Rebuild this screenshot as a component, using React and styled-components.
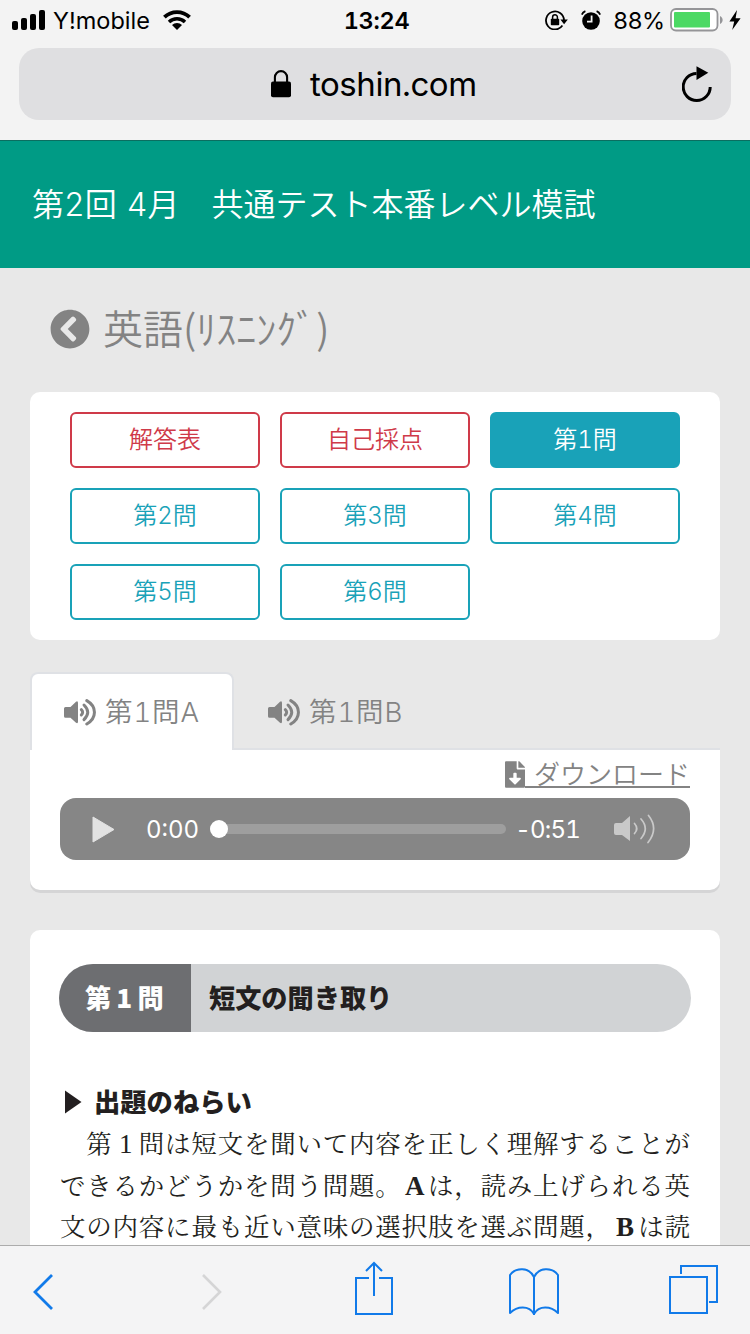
import styled, { createGlobalStyle, css } from 'styled-components';
import { FaChevronCircleLeft, FaFileDownload } from 'react-icons/fa';

const questionLinks = [
  { label: '解答表', variant: 'danger' },
  { label: '自己採点', variant: 'danger' },
  { label: '第1問', variant: 'info', active: true },
  { label: '第2問', variant: 'info' },
  { label: '第3問', variant: 'info' },
  { label: '第4問', variant: 'info' },
  { label: '第5問', variant: 'info' },
  { label: '第6問', variant: 'info' },
];

const audioTabs = [
  { label: '第1問A', active: true },
  { label: '第1問B', active: false },
];

const colors = {
  danger: '#cf3a49',
  info: '#19a2b8',
};

const StatusBar = () => (
  <StatusRow>
    <StatusLeft>
      <svg width="34" height="20" viewBox="0 0 34 20">
        <rect x="0" y="11" width="6" height="9" rx="2" />
        <rect x="9" y="8" width="6" height="12" rx="2" />
        <rect x="18" y="4" width="6" height="16" rx="2" />
        <rect x="27" y="0" width="6" height="20" rx="2" />
      </svg>
      <Carrier>Y!mobile</Carrier>
      <svg width="28" height="20" viewBox="0 0 28 20">
        <path d="M1.4 7.2a18 18 0 0 1 25.2 0" fill="none" stroke="#000" strokeWidth="3.8" />
        <path d="M6 12a11.6 11.6 0 0 1 16 0" fill="none" stroke="#000" strokeWidth="3.5" />
        <path d="M14 20l-5-5a7.2 7.2 0 0 1 10 0z" />
      </svg>
    </StatusLeft>
    <Clock>13:24</Clock>
    <StatusRight>
      <svg width="23" height="20" viewBox="0 0 23 20">
        <path d="M17.4 15.6a9 9 0 1 1 1.6-5.4" fill="none" stroke="#000" strokeWidth="1.8" />
        <path d="M15.4 9.6h7.4l-3.7 4.6z" />
        <rect x="5.8" y="8.8" width="8.4" height="6.4" rx="0.8" />
        <path d="M7.6 9V7.2a2.4 2.4 0 0 1 4.8 0V9" fill="none" stroke="#000" strokeWidth="1.5" />
      </svg>
      <AlarmIcon width="20" height="20" viewBox="0 0 20 20">
        <circle cx="10" cy="11" r="8.8" />
        <path d="M10.6 5.4v6.2H6" fill="none" stroke="#f3f3f3" strokeWidth="1.8" />
        <path d="M0.8 4.6A6 6 0 0 1 4.4 1.1M19.2 4.6a6 6 0 0 0-3.6-3.5" fill="none" stroke="#000" strokeWidth="1.8" />
      </AlarmIcon>
      <Percent>88%</Percent>
      <svg width="54" height="24" viewBox="0 0 54 24">
        <rect x="1" y="1" width="46.5" height="21.5" rx="5" fill="#fff" stroke="#959598" strokeWidth="1.8" />
        <rect x="4" y="4" width="36" height="15.5" rx="1" fill="#4cd964" />
        <path d="M50 8c3.5 1.5 3.5 6.5 0 8z" fill="#959598" />
      </svg>
      <BoltIcon width="12" height="20" viewBox="0 0 12 20">
        <path d="M8 0L0.4 11.4H5.2L3.2 20L11.6 8.2H6.6z" />
      </BoltIcon>
    </StatusRight>
  </StatusRow>
);

const AddressBar = () => (
  <AddressField>
    <svg width="20" height="28" viewBox="0 0 20 28">
      <rect x="0" y="11.5" width="20" height="15.8" rx="2" />
      <path d="M3.9 12.5V7.2a6 6 0 0 1 12.2 0v5.3" fill="none" stroke="#000" strokeWidth="2.1" />
    </svg>
    <Host>toshin.com</Host>
    <ReloadIcon width="32" height="36" viewBox="0 0 32 36">
      <path d="M28.2 21A13.5 13.5 0 1 1 14.5 7.5" fill="none" stroke="#000" strokeWidth="3" />
      <path d="M14.5 0.3V14L26.3 6.8z" />
    </ReloadIcon>
  </AddressField>
);

const VolumeIcon = () => (
  <svg width="33" height="27" viewBox="0 0 33 27">
    <path
      d="M1.5 8H6.5L12 2.7Q14 1.5 14 4V22.5Q14 25 12 23.8L6.5 18.7H1.5Q0 18.7 0 17.2V9.5Q0 8 1.5 8z"
      fill="currentColor"
    />
    <g fill="none" stroke="currentColor" strokeWidth="3" strokeLinecap="round">
      <path d="M17.3 10.7Q20 13.3 17.3 16" />
      <path d="M20 6Q27.5 13.3 20 20.6" />
      <path d="M22.8 1.6C33 7.5 33 19 22.8 25" />
    </g>
  </svg>
);

const Player = () => (
  <PlayerBox>
    <svg width="23" height="27" viewBox="0 0 23 27">
      <path d="M1 1L22 13.5L1 26z" fill="#e2e2e2" stroke="#e2e2e2" strokeLinejoin="round" />
    </svg>
    <Elapsed>0:00</Elapsed>
    <Track>
      <Knob />
    </Track>
    <Remaining>-0:51</Remaining>
    <svg width="42" height="30" viewBox="0 0 42 30">
      <path d="M2 9H8L16 2V27L8 21H2Q0 21 0 19V11Q0 9 2 9z" fill="#c9c9c9" />
      <g fill="none" stroke="#c9c9c9" strokeWidth="1.7" strokeLinecap="round">
        <path d="M20.5 9.5Q25 14.5 20.5 19.5" />
        <path d="M27 5Q35.5 14.5 27 24.5" />
        <path d="M34.5 1.5Q45 14.5 34 28.5" />
      </g>
    </svg>
  </PlayerBox>
);

const Toolbar = () => (
  <ToolbarRow>
    <svg width="20" height="40" viewBox="0 0 20 40">
      <path d="M19 5L2 22L19 39" fill="none" stroke="#117ae9" strokeWidth="2.8" />
    </svg>
    <svg width="20" height="40" viewBox="0 0 20 40">
      <path d="M1 5L18 22L1 39" fill="none" stroke="#d5d5d6" strokeWidth="2.6" />
    </svg>
    <svg width="40" height="60" viewBox="0 0 40 60">
      <g fill="none" stroke="#117ae9" strokeWidth="2">
        <path d="M15 18H2V54H38V18H25" />
        <path d="M20 36V4M12 11L20 3L28 11" />
      </g>
    </svg>
    <svg width="52" height="54" viewBox="0 0 52 54">
      <g fill="none" stroke="#117ae9" strokeWidth="2" strokeLinejoin="round">
        <path d="M26 14C21 4 8 4 2 12V50C9 43 21 42 26 51C31 42 43 43 50 50V12C44 4 31 4 26 14z" />
        <path d="M26 14V52" />
      </g>
    </svg>
    <svg width="50" height="50" viewBox="0 0 50 50">
      <g fill="none" stroke="#117ae9" strokeWidth="2">
        <rect x="2" y="12" width="37" height="36" />
        <path d="M13 9V1H49V37H41" />
      </g>
    </svg>
  </ToolbarRow>
);

const App = () => {
  return (
    <Screen>
      <GlobalStyle />
      <BrowserTop>
        <StatusBar />
        <AddressBar />
      </BrowserTop>

      <Page>
        <Banner>第2回 4月　共通テスト本番レベル模試</Banner>

        <SubjectHeading>
          <FaChevronCircleLeft size={40} />
          <span>英語(ﾘｽﾆﾝｸﾞ)</span>
        </SubjectHeading>

        <LinkCard>
          {questionLinks.map(({ label, variant, active }) => (
            <LinkButton key={label} $variant={variant} $active={active}>
              {label}
            </LinkButton>
          ))}
        </LinkCard>

        <Tabs>
          {audioTabs.map(({ label, active }) => (
            <Tab key={label} $active={active}>
              <VolumeIcon />
              <span>{label}</span>
            </Tab>
          ))}
        </Tabs>
        <TabPanel>
          <Download>
            <FaFileDownload />
            <DownloadText>ダウンロード</DownloadText>
          </Download>
          <Player />
        </TabPanel>

        <Article>
          <Pill>
            <PillNumber>
              第<Cell>1</Cell>問
            </PillNumber>
            <PillTitle>短文の聞き取り</PillTitle>
          </Pill>
          <Aim>
            <svg width="17" height="24" viewBox="0 0 17 24">
              <path d="M0 0.5L16.5 12L0 23.5z" fill="#231f20" />
            </svg>
            <span>出題のねらい</span>
          </Aim>
          <Body>
            <Line $indent>
              第<Cell>1</Cell>問は短文を聞いて内容を正しく理解することが
            </Line>
            <Line>
              できるかどうかを問う問題。<Cell $bold>A</Cell>は，読み上げられる英
            </Line>
            <Line>
              文の内容に最も近い意味の選択肢を選ぶ問題，<Cell $bold>B</Cell>は読
            </Line>
          </Body>
        </Article>
      </Page>

      <Toolbar />
    </Screen>
  );
};

export default App;

const GlobalStyle = createGlobalStyle`
  * {
    box-sizing: border-box;
  }
  body {
    margin: 0;
    background-color: #e8e8e8;
    font-family: Inter, 'Noto Sans CJK JP', sans-serif;
    font-variant-numeric: tabular-nums;
  }
  svg {
    display: block;
    flex-shrink: 0;
  }
`;

const Screen = styled.div`
  width: 750px;
  height: 1334px;
  display: flex;
  flex-direction: column;
  overflow: hidden;
`;

const BrowserTop = styled.header`
  height: 140px;
  flex-shrink: 0;
  background-color: #f3f3f3;
`;

const StatusRow = styled.div`
  height: 48px;
  padding: 0 9px 8px 12px;
  display: grid;
  grid-template-columns: 1fr 70px 1fr;
  align-items: center;
  font-size: 23.5px;
  line-height: 38px;
  color: #000;
  span {
    padding-top: 2px;
  }
`;

const StatusLeft = styled.div`
  display: flex;
  align-items: center;
`;

const Carrier = styled.span`
  width: 110px;
  margin-left: 7px;
`;

const Clock = styled.span`
  text-align: center;
  font-weight: 600;
  letter-spacing: -0.3px;
  white-space: nowrap;
`;

const StatusRight = styled.div`
  display: flex;
  align-items: center;
  justify-content: flex-end;
`;

const AlarmIcon = styled.svg`
  margin-left: 13px;
`;

const Percent = styled.span`
  width: 57px;
  margin-left: 12px;
  letter-spacing: -0.8px;
  white-space: nowrap;
`;

const BoltIcon = styled.svg`
  margin-left: 5px;
`;

const AddressField = styled.div`
  height: 72px;
  margin: 0 19px;
  padding: 0 17px 0 252px;
  display: flex;
  align-items: center;
  background-color: #dfdfe1;
  border-radius: 20px;
`;

const Host = styled.span`
  margin-left: 19px;
  font-size: 33px;
  line-height: 72px;
  letter-spacing: -0.45px;
  color: #000;
`;

const ReloadIcon = styled.svg`
  margin-left: auto;
`;

const Page = styled.main`
  flex: 1;
  min-height: 0;
  overflow: hidden;
`;

const Banner = styled.div`
  height: 128px;
  padding-left: 32px;
  background-color: #009b85;
  border-top: 1px solid #0b6e60;
  font-size: 32px;
  font-weight: 350;
  line-height: 128px;
  word-spacing: 1.5px;
  color: #fff;
`;

const SubjectHeading = styled.h1`
  height: 124px;
  margin: 0;
  padding: 0 0 2px 50px;
  display: flex;
  align-items: center;
  gap: 13px;
  font-family: 'Noto Sans CJK JP', sans-serif;
  font-size: 40px;
  font-weight: 350;
  line-height: 120px;
  color: #838383;
  span {
    padding-bottom: 4px;
  }
`;

const LinkCard = styled.nav`
  margin: 0 30px;
  padding: 20px 40px;
  display: grid;
  grid-template-columns: repeat(3, 190px);
  gap: 20px;
  background-color: #fff;
  border-radius: 10px;
`;

const LinkButton = styled.a`
  height: 56px;
  border: 2px solid ${({ $variant }) => colors[$variant]};
  border-radius: 6px;
  background-color: ${({ $variant, $active }) => ($active ? colors[$variant] : 'transparent')};
  color: ${({ $variant, $active }) => ($active ? '#fff' : colors[$variant])};
  font-size: 24px;
  font-weight: 350;
  line-height: 52px;
  text-align: center;
`;

const Tabs = styled.div`
  height: 78px;
  margin: 32px 30px 0;
  display: flex;
  border-bottom: 2px solid #dfe1e5;
`;

const Tab = styled.div`
  height: 78px;
  width: 204px;
  padding-left: 32px;
  display: flex;
  align-items: center;
  gap: 8px;
  border: 2px solid transparent;
  border-bottom: none;
  border-radius: 8px 8px 0 0;
  font-size: 27.5px;
  font-weight: 350;
  line-height: 72px;
  letter-spacing: 0.9px;
  white-space: nowrap;
  color: #838383;
  ${({ $active }) =>
    $active &&
    css`
      background-color: #fff;
      border-color: #dfe1e5;
    `}
`;

const TabPanel = styled.section`
  height: 140px;
  margin: 0 30px;
  padding: 4px 30px 0;
  background-color: #fff;
  border-radius: 0 0 10px 10px;
  box-shadow: 0 3px 0 #d5d5d6;
`;

const Download = styled.a`
  height: 44px;
  padding-top: 7px;
  display: flex;
  align-items: flex-start;
  justify-content: flex-end;
  font-size: 26px;
  font-weight: 350;
  color: #838383;
  svg {
    width: 20px;
    height: 27px;
  }
`;

const DownloadText = styled.span`
  height: 27px;
  padding-left: 9px;
  border-bottom: 2px solid #838383;
  line-height: 27px;
`;

const PlayerBox = styled.div`
  height: 62px;
  padding: 0 34px 0 32px;
  display: flex;
  align-items: center;
  background-color: #868686;
  border-radius: 16px;
  color: #fff;
  font-size: 24px;
  line-height: 60px;
  span {
    padding-top: 2px;
  }
`;

const Elapsed = styled.span`
  width: 64px;
  margin-left: 31px;
`;

const Track = styled.div`
  width: 297px;
  height: 10px;
  display: flex;
  align-items: center;
  background-color: #9e9e9e;
  border-radius: 5px;
`;

const Knob = styled.div`
  width: 18px;
  height: 18px;
  background-color: #fff;
  border-radius: 50%;
`;

const Remaining = styled.span`
  width: 99px;
  margin-left: 9px;
  letter-spacing: -0.8px;
`;

const Article = styled.article`
  height: 400px;
  margin: 40px 30px 0;
  padding: 34px 29px 0;
  background-color: #fff;
  border-radius: 10px;
  color: #231f20;
  font-family: 'Noto Sans CJK JP', sans-serif;
`;

const Pill = styled.h2`
  height: 68px;
  margin: 0;
  display: flex;
  overflow: hidden;
  border-radius: 34px;
  background-color: #d1d3d5;
  font-size: 26.2px;
  font-weight: 900;
  line-height: 66px;
`;

const PillNumber = styled.span`
  width: 132px;
  padding-left: 26px;
  background-color: #6d6e71;
  color: #fff;
`;

const PillTitle = styled.span`
  padding-left: 18px;
`;

const Aim = styled.h3`
  height: 40px;
  margin: 50px 0 0;
  padding-left: 6px;
  display: flex;
  align-items: center;
  gap: 12px;
  font-size: 26.3px;
  font-weight: 900;
  line-height: 38px;
  span {
    padding-bottom: 2px;
  }
`;

const Body = styled.div`
  padding-left: 1px;
  font-family: 'Noto Serif CJK JP', 'Noto Sans CJK JP', serif;
  font-size: 25.5px;
  font-weight: 400;
  letter-spacing: 0.78px;
`;

const Line = styled.p`
  margin: 0;
  height: 41.5px;
  line-height: 41.5px;
  text-indent: ${({ $indent }) => ($indent ? '26.27px' : '0')};
  white-space: nowrap;
`;

const Cell = styled.span`
  display: inline-block;
  width: 26.27px;
  text-align: center;
  text-indent: 0;
  letter-spacing: 0;
  ${Body} & {
    font-family: 'Liberation Serif', serif;
    font-size: 27px;
    line-height: 30px;
    font-weight: ${({ $bold }) => ($bold ? 700 : 400)};
  }
`;

const ToolbarRow = styled.footer`
  height: 89px;
  flex-shrink: 0;
  padding: 0 32px 0 33px;
  display: grid;
  grid-template-columns: 169px 152px 154px 160px 50px;
  align-items: center;
  background-color: #f4f4f5;
  border-top: 1px solid #acacac;
`;
